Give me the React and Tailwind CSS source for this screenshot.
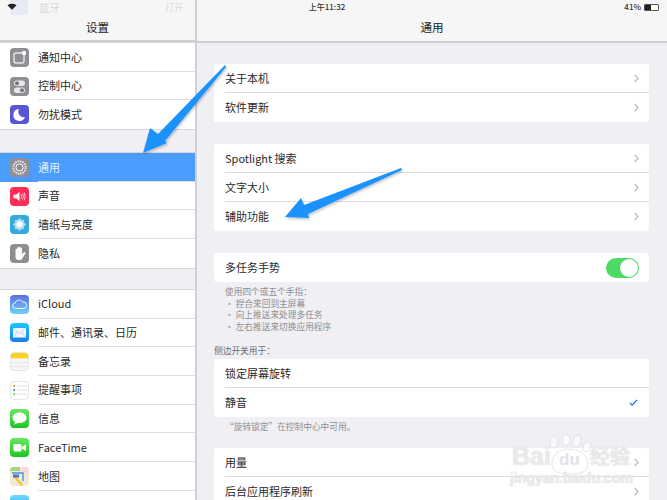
import React from "react";
import { ChevronRight } from "lucide-react";

const font = { fontFamily: '"Noto Sans CJK SC", "Noto Sans", sans-serif' };

const Tile = ({ className = "", children }) => (
  <div className={`w-[19px] h-[19px] rounded-[4px] flex items-center justify-center overflow-hidden shrink-0 ${className}`}>
    <svg viewBox="0 0 19 19" className="w-[19px] h-[19px]">
      {children}
    </svg>
  </div>
);

const icons = {
  notify: (
    <Tile className="bg-[#8e8e93]">
      <rect x="4" y="5" width="10" height="10" rx="2" fill="none" stroke="#e8e8ea" strokeWidth="1.4" />
      <circle cx="14" cy="5" r="2.2" fill="#fff" />
    </Tile>
  ),
  control: (
    <Tile className="bg-[#8e8e93]">
      <rect x="4" y="3.5" width="11" height="5.5" rx="2.7" fill="#e8e8ea" />
      <circle cx="7" cy="6.2" r="2" fill="#77777c" />
      <rect x="4" y="10.5" width="11" height="5.5" rx="2.7" fill="#e8e8ea" />
      <circle cx="12" cy="13.2" r="2" fill="#77777c" />
    </Tile>
  ),
  moon: (
    <Tile className="bg-[#5856d6]">
      <path d="M9 4 A6 6 0 1 0 15 12 A5.5 5.5 0 0 1 9 4Z" fill="#fff" />
    </Tile>
  ),
  gear: (
    <Tile className="bg-[#8e8e93]">
      <circle cx="9.5" cy="9.5" r="6.2" fill="none" stroke="#e6e6e8" strokeWidth="2" strokeDasharray="1.6 0.8" />
      <circle cx="9.5" cy="9.5" r="3.6" fill="none" stroke="#fff" strokeWidth="1" />
    </Tile>
  ),
  sound: (
    <Tile className="bg-[#ff2d55]">
      <path d="M3.5 7.8 H6 L9.5 5 V14 L6 11.2 H3.5Z" fill="#fff" />
      <path d="M11 7.5 Q12 9.5 11 11.5 M12.6 6.5 Q14.2 9.5 12.6 12.5 M14.2 5.5 Q16.2 9.5 14.2 13.5" fill="none" stroke="#ffd5dd" strokeWidth="0.9" />
    </Tile>
  ),
  flower: (
    <Tile className="bg-[#34aadc]">
      {[0, 45, 90, 135].map((a) => (
        <ellipse key={a} cx="9.5" cy="9.5" rx="2.4" ry="6.4" fill="#ffffff" fillOpacity="0.55" transform={`rotate(${a} 9.5 9.5)`} />
      ))}
      <circle cx="9.5" cy="9.5" r="1.8" fill="#fff" />
    </Tile>
  ),
  hand: (
    <Tile className="bg-[#8e8e93]">
      <path d="M5.5 9 V5.5 a.8 .8 0 0 1 1.6 0 V4 a.8 .8 0 0 1 1.6 0 V3.6 a.8 .8 0 0 1 1.6 0 V4.4 a.8 .8 0 0 1 1.6 0 V10 L14 8.2 a.9 .9 0 0 1 1.3 1.2 L12 15 a2.5 2.5 0 0 1 -2 1 H8.5 A3 3 0 0 1 5.5 13Z" fill="#fff" />
    </Tile>
  ),
  cloud: (
    <Tile className="bg-gradient-to-b from-[#5a6ee0] to-[#6fd0fb]">
      <path d="M5.5 13.5 a2.7 2.7 0 0 1 -.3 -5.4 a4 4 0 0 1 7.4 -1 a3.2 3.2 0 0 1 1.4 6.4Z" fill="none" stroke="#fff" strokeWidth="0.9" />
    </Tile>
  ),
  mail: (
    <Tile className="bg-gradient-to-b from-[#1fc8fb] to-[#1d7cf2]">
      <rect x="3" y="5" width="13" height="9.5" fill="#f3f7fd" />
      <path d="M3 5 L9.5 10.5 L16 5 M3 14.5 L7.5 9 M16 14.5 L11.5 9" fill="none" stroke="#a9c6ea" strokeWidth="0.7" />
    </Tile>
  ),
  notes: (
    <Tile className="bg-[#f6f6f6] border border-[#e6e6e6]">
      <rect width="19" height="6" fill="#fdd21f" />
      <path d="M0 11 H19 M0 15 H19" stroke="#d9d9d9" strokeWidth="0.7" />
    </Tile>
  ),
  reminders: (
    <Tile className="bg-white border border-[#e6e6e6]">
      <circle cx="3.5" cy="4.5" r="1.2" fill="#ff9500" />
      <circle cx="3.5" cy="9" r="1.2" fill="#1d8cf8" />
      <circle cx="3.5" cy="13.5" r="1.2" fill="#6fd03a" />
      <path d="M6.5 4.5 H18 M6.5 9 H18 M6.5 13.5 H18" stroke="#c9c9c9" strokeWidth="0.7" />
    </Tile>
  ),
  message: (
    <Tile className="bg-gradient-to-b from-[#65e85f] to-[#16c61d]">
      <path d="M9.5 3.5 C5.2 3.5 2.5 6 2.5 8.8 C2.5 10.6 3.6 12 5.2 13 C5 14 4.4 14.8 3.8 15.3 C5.2 15.2 6.6 14.6 7.5 13.9 C8.2 14 8.8 14.1 9.5 14.1 C13.8 14.1 16.5 11.6 16.5 8.8 C16.5 6 13.8 3.5 9.5 3.5Z" fill="#fff" />
    </Tile>
  ),
  facetime: (
    <Tile className="bg-gradient-to-b from-[#65e85f] to-[#16c61d]">
      <rect x="3.5" y="6" width="8" height="7.5" rx="1.6" fill="#fff" />
      <path d="M12 9 L16 6.2 V13.3 L12 10.5Z" fill="#fff" />
    </Tile>
  ),
  maps: (
    <Tile className="bg-[#efe8d3]">
      <rect x="12" width="7" height="6" fill="#fbd5dc" />
      <rect x="0" width="10" height="4" fill="#a5d67a" />
      <path d="M2 6 H13 V14" fill="none" stroke="#4f8fea" strokeWidth="1.4" />
      <path d="M4 9 L12 18" stroke="#f5c62f" strokeWidth="2.4" />
      <rect x="3" y="7.5" width="6" height="3" fill="#4f6fd8" />
    </Tile>
  ),
  safari: <Tile className="bg-gradient-to-b from-[#6fdcfb] to-[#1d8cf2]" />,
};

const SideRow = ({ icon, label, selected, last }) => (
  <div className={`h-[28.7px] pl-[10px] flex items-center ${selected ? "bg-[#4a9dff]" : "bg-white"}`}>
    {icons[icon]}
    <div className={`ml-[9px] flex-1 h-full flex items-center text-[11px] ${selected ? "text-[#e4f0ff]" : "text-[#2a2a2a]"} ${last ? "" : "border-b border-[#dfdfe2]"}`}>
      {label}
    </div>
  </div>
);

const SideGroup = ({ rows }) => (
  <div className="border-y border-[#d8d8dc]">
    {rows.map((r, i) => (
      <SideRow key={r.icon} {...r} last={i === rows.length - 1} />
    ))}
  </div>
);

const Card = ({ children }) => <div className="mx-[17px] w-[435px] bg-white rounded-[3px] overflow-hidden">{children}</div>;

const Row = ({ label, chevron = true, last, right }) => (
  <div className="h-[29px] pl-[11px] bg-white">
    <div className={`h-full pr-[6px] flex items-center justify-between text-[11px] text-[#2a2a2a] ${last ? "" : "border-b border-[#dddde0]"}`}>
      <span>{label}</span>
      {chevron && <ChevronRight size={13} strokeWidth={2} className="text-[#b9b9bd]" />}
      {right}
    </div>
  </div>
);

const Note = ({ children }) => <div className="pl-[28px] text-[8.7px] leading-[11.7px] text-[#8e8e93]">{children}</div>;

const Sidebar = () => (
  <div className="w-[197px] h-[500px] shrink-0 border-r-2 border-[#d0d0d4] bg-[#efeff4] overflow-hidden">
    <div className="h-[42px] bg-[#f6f6f7] border-b-2 border-[#cfcfd2] relative">
      {/* ghost of the scrolled rows behind the bar */}
      <div className="absolute left-[10px] top-0 w-[18px] h-[15px] rounded-b-[4px] bg-[#e6ebf3]" />
      <div className="absolute left-[39px] top-[1px] text-[10.5px] leading-[14px] text-[#d8d8da]">蓝牙</div>
      <div className="absolute left-[165px] top-[1px] text-[9px] leading-[13px] text-[#dcdcde]">打开</div>
      <svg viewBox="0 0 12 8" className="absolute left-[7px] top-[3px] w-[10px] h-[7px]">
        <path d="M6 8 L0.5 2.5 Q6 -1 11.500 2.500Z" fill="#222" />
      </svg>
      <div className="pt-[19px] text-center text-[11.500px] text-[#222] relative">设置</div>
    </div>
    <SideGroup
      rows={[
        { icon: "notify", label: "通知中心" },
        { icon: "control", label: "控制中心" },
        { icon: "moon", label: "勿扰模式" },
      ]}
    />
    <div className="h-[22px]" />
    <SideGroup
      rows={[
        { icon: "gear", label: "通用", selected: true },
        { icon: "sound", label: "声音" },
        { icon: "flower", label: "墙纸与亮度" },
        { icon: "hand", label: "隐私" },
      ]}
    />
    <div className="h-[20px]" />
    <SideGroup
      rows={[
        { icon: "cloud", label: "iCloud" },
        { icon: "mail", label: "邮件、通讯录、日历" },
        { icon: "notes", label: "备忘录" },
        { icon: "reminders", label: "提醒事项" },
        { icon: "message", label: "信息" },
        { icon: "facetime", label: "FaceTime" },
        { icon: "maps", label: "地图" },
        { icon: "safari", label: "" },
      ]}
    />
  </div>
);

const Main = () => (
  <div className="flex-1 h-[500px] bg-[#efeff4] overflow-hidden">
    <div className="h-[43px] bg-[#f6f6f7] border-b-2 border-[#cfcfd2] relative">
      <div className="absolute left-0 right-0 top-0 text-center text-[8px] leading-[14px] font-medium text-[#333] pr-[210px]">上午11:32</div>
      <div className="absolute right-[8px] top-[1px] flex items-center gap-[3px]">
        <span className="text-[8px] leading-[12px] font-medium text-[#333]">41%</span>
        <div className="w-[15px] h-[7px] border border-[#555] rounded-[1px] bg-white flex">
          <div className="w-[6px] bg-[#222]" />
        </div>
      </div>
      <div className="pt-[19px] text-center text-[11.500px] text-[#222]">通用</div>
    </div>
    <div className="pt-[21px]">
      <Card>
        <Row label="关于本机" />
        <Row label="软件更新" last />
      </Card>
      <div className="h-[22px]" />
      <Card>
        <Row label="Spotlight 搜索" />
        <Row label="文字大小" />
        <Row label="辅助功能" last />
      </Card>
      <div className="h-[22px]" />
      <Card>
        <Row
          label="多任务手势"
          chevron={false}
          last
          right={
            <div className="w-[33px] h-[20px] mr-[4px] rounded-full bg-[#4cd964] flex justify-end p-[1px]">
              <div className="w-[18px] h-[18px] rounded-full bg-white" />
            </div>
          }
        />
      </Card>
      <div className="pt-[4px] h-[47px]">
        <Note>
          <div>使用四个或五个手指：</div>
          <div>• 捏合来回到主屏幕</div>
          <div>• 向上推送来处理多任务</div>
          <div>• 左右推送来切换应用程序</div>
        </Note>
      </div>
      <div className="pl-[17px] h-[30px] pt-[16px] text-[8.7px] leading-[12px] text-[#6d6d72]">侧边开关用于：</div>
      <Card>
        <Row label="锁定屏幕旋转" chevron={false} />
        <Row
          label="静音"
          chevron={false}
          last
          right={
            <svg viewBox="0 0 10 8" className="w-[9px] h-[7px] mr-[5px]">
              <path d="M1 4.500 L3.500 7 L9 1" fill="none" stroke="#1f7cf0" strokeWidth="1.5" />
            </svg>
          }
        />
      </Card>
      <div className="pl-[28px] pt-[4px] h-[31px] text-[8.7px] leading-[12px] text-[#8e8e93]">“旋转锁定”在控制中心中可用。</div>
      <Card>
        <Row label="用量" />
        <Row label="后台应用程序刷新" last />
      </Card>
    </div>
  </div>
);

const Arrows = () => (
  <svg viewBox="0 0 667 500" className="absolute inset-0 w-[667px] h-[500px] pointer-events-none">
    <defs>
      <filter id="arrowShadow" x="-20%" y="-20%" width="140%" height="140%">
        <feDropShadow dx="1" dy="1.500" stdDeviation="1" floodColor="#000" floodOpacity="0.25" />
      </filter>
    </defs>
    <g fill="#1c93fc" filter="url(#arrowShadow)">
      <polygon points="143,153 150,128 158,134 225,65 226,67 165,141 167,143" />
      <polygon points="285,217 301,198 304,205 401,168 402,170 308,214 309,218" />
    </g>
  </svg>
);

// baidu jingyan watermark
const Watermark = () => (
  <div className="absolute left-[510px] top-[428px] w-[125px] h-[62px] pointer-events-none">
    <svg viewBox="0 0 125 62" className="absolute inset-0 w-[125px] h-[62px]">
      <g fill="#ffffff" fillOpacity="0.6" stroke="#d5d5d8" strokeWidth="0.6">
        <ellipse cx="44" cy="14" rx="4" ry="6" />
        <ellipse cx="56" cy="12" rx="4" ry="6" transform="rotate(-5 56 12)" />
        <ellipse cx="67" cy="13" rx="4" ry="6" transform="rotate(10 67 13)" />
        <ellipse cx="77" cy="19" rx="4" ry="5" transform="rotate(25 77 19)" />
        <path d="M42 36 C42 26 50 21 60 21 C70 21 78 27 78 36 C78 43 72 46 60 46 C48 46 42 43 42 36Z" />
      </g>
    </svg>
    <div className="absolute left-[2px] top-[14px] text-[25px] leading-[28px] font-bold text-white/70 [text-shadow:0_0_1px_#bbb] [font-family:'Liberation_Sans',sans-serif]">Bai</div>
    <div className="absolute left-[49px] top-[22px] text-[17px] leading-[20px] font-bold text-[#e2e2e5] [font-family:'Liberation_Sans',sans-serif]">du</div>
    <div className="absolute left-[80px] top-[16px] text-[20px] leading-[24px] font-bold text-white/70 [text-shadow:0_0_1px_#bbb]">经验</div>
    <div className="absolute left-0 top-[42px] text-[14px] leading-[16px] font-bold text-white/70 [text-shadow:0_0_1px_#bbb] [font-family:'Liberation_Sans',sans-serif]">jingyan.baidu.com</div>
  </div>
);

const App = () => {
  return (
    <div className="relative w-[667px] h-[500px] overflow-hidden flex" style={font}>
      <Sidebar />
      <Main />
      <Arrows />
      <Watermark />
    </div>
  );
};

export default App;
